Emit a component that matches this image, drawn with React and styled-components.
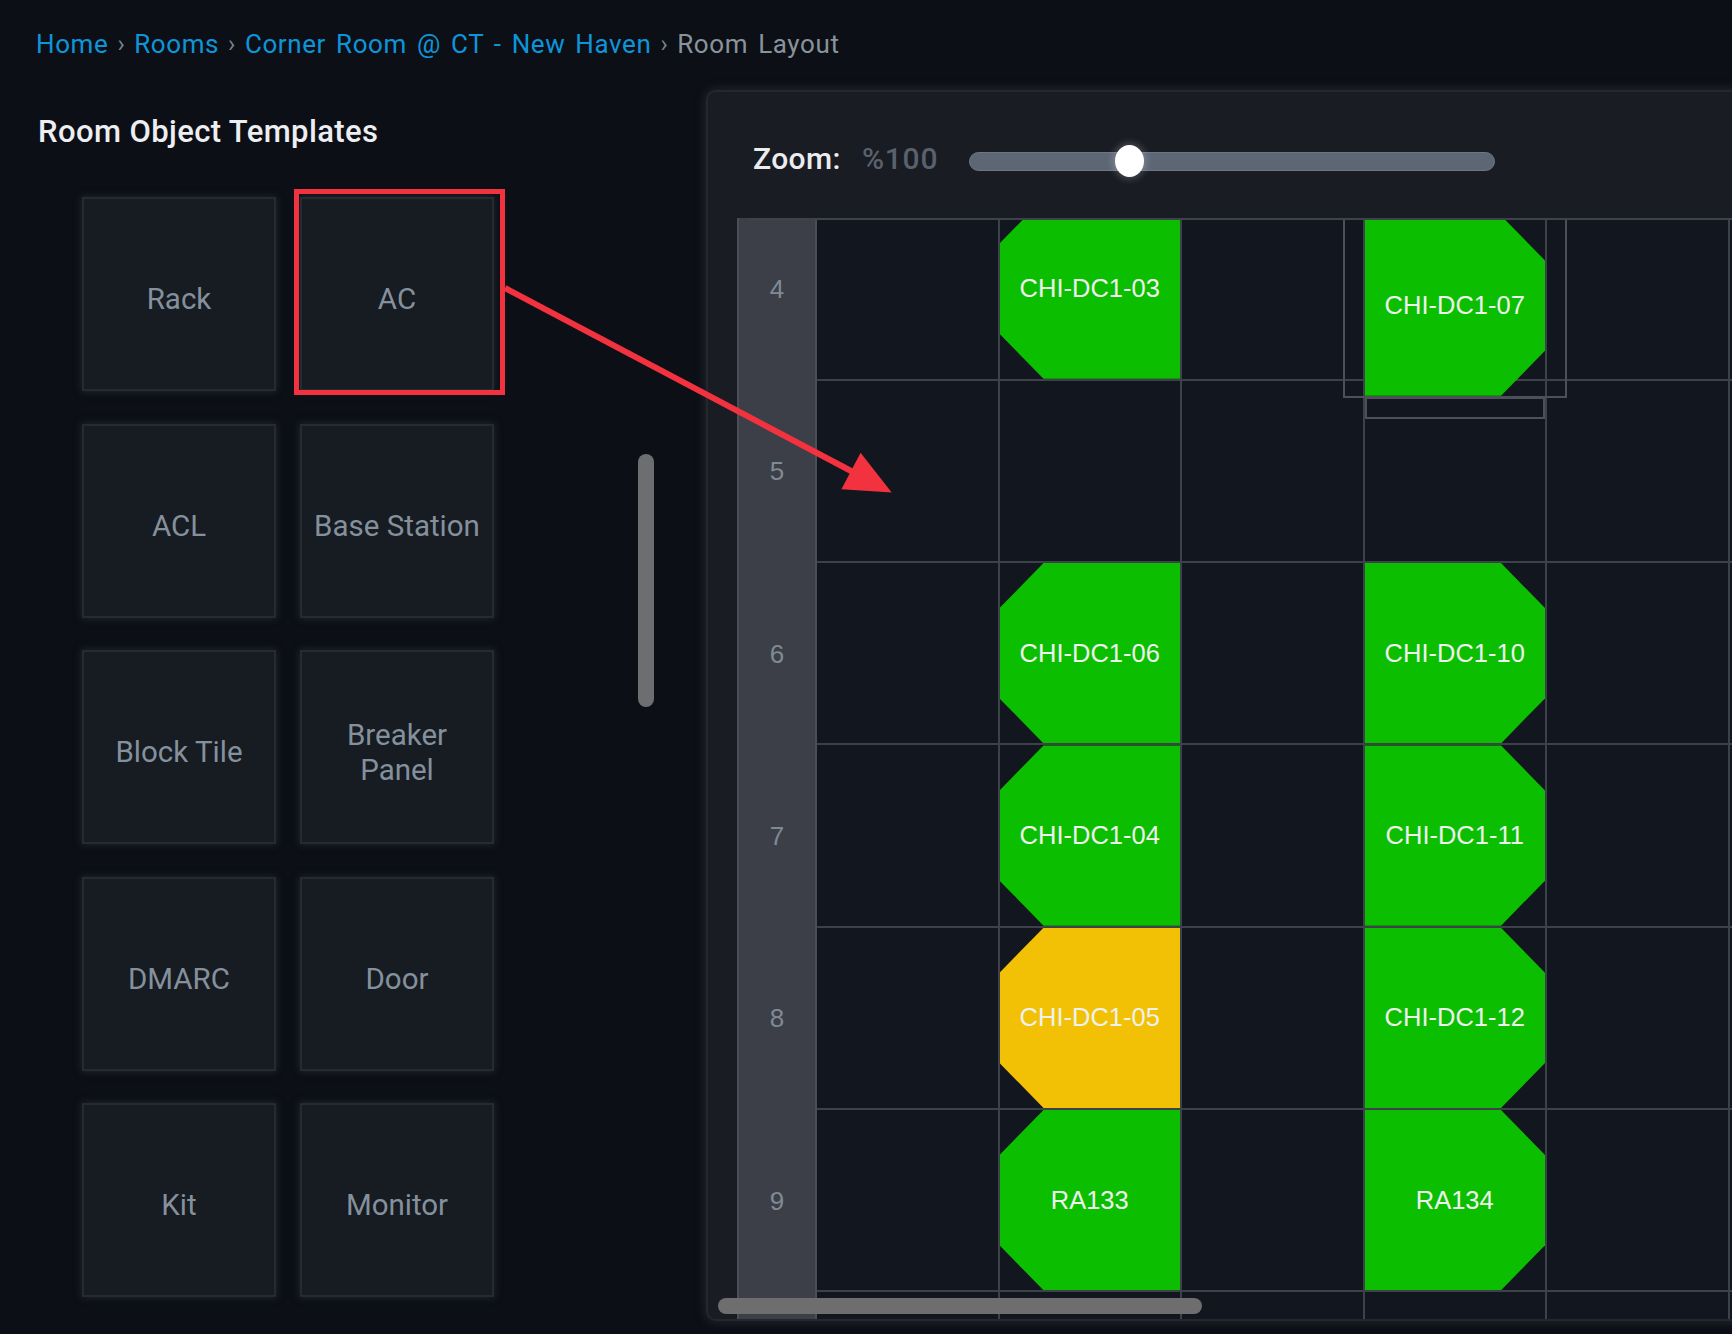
import React from "react";
import styled, { createGlobalStyle } from "styled-components";

const GlobalStyle = createGlobalStyle`
  html, body {
    margin: 0;
    padding: 0;
    background: #0c0f16;
  }
  body {
    font-family: Roboto, "Liberation Sans", sans-serif;
    overflow: hidden;
  }
  * {
    box-sizing: border-box;
  }
`;

const Page = styled.div`
  position: relative;
  width: 1732px;
  height: 1334px;
  overflow: hidden;
  background: #0c0f16;
`;

const Breadcrumb = styled.nav`
  display: flex;
  align-items: center;
  height: 59px;
  padding: 28px 0 0 36px;
  font-size: 26px;
  line-height: 32px;
  letter-spacing: 0.6px;
  word-spacing: 3px;
  white-space: nowrap;
`;

const Crumb = styled.span`
  color: ${(p) => (p.$current ? "#8a939c" : "#0e95d9")};
`;

const Sep = styled.span`
  margin: 0 9px;
  color: #7a848e;
  font-size: 24px;
`;

const Main = styled.div`
  display: flex;
  align-items: flex-start;
  margin-top: 31px;
`;

const Sidebar = styled.aside`
  position: relative;
  flex: 0 0 706px;
  height: 1244px;
  padding: 23px 0 0 38px;
`;

const SidebarTitle = styled.h2`
  margin: 0;
  font-size: 31px;
  line-height: 38px;
  font-weight: 500;
  letter-spacing: 0.4px;
  color: #eceef1;
`;

const TemplateGrid = styled.div`
  display: grid;
  grid-template-columns: repeat(2, 194px);
  grid-auto-rows: 194px;
  column-gap: 24px;
  row-gap: 32.5px;
  margin: 46px 0 0 44px;
`;

const TemplateCard = styled.div`
  display: flex;
  align-items: center;
  justify-content: center;
  padding: 11px 10px 0;
  text-align: center;
  background: #171b22;
  border: 2px solid #262a31;
  box-shadow: 0 0 7px 1px rgba(48, 52, 60, 0.55);
  color: #84919d;
  font-size: 29.5px;
  line-height: 35px;
`;

const SideScroll = styled.div`
  position: absolute;
  left: 638px;
  top: 364px;
  width: 16px;
  height: 253px;
  border-radius: 8px;
  background: #6d6e70;
`;

const Panel = styled.section`
  display: flex;
  flex-direction: column;
  flex: 0 0 1100px;
  height: 1231px;
  background: #191c23;
  border: 2px solid #24272e;
  border-radius: 10px;
  box-shadow: 0 0 8px 2px rgba(34, 37, 44, 0.9);
  overflow: hidden;
`;

const ZoomBar = styled.div`
  display: flex;
  align-items: center;
  flex: 0 0 126px;
  padding: 8px 0 0 45px;
`;

const ZoomLabel = styled.span`
  font-size: 30px;
  line-height: 36px;
  font-weight: 500;
  letter-spacing: 0.4px;
  color: #ececee;
`;

const ZoomValue = styled.span`
  margin: 0 31px 0 21px;
  font-size: 30px;
  line-height: 36px;
  font-weight: 500;
  letter-spacing: 0.8px;
  color: #59616d;
`;

const Track = styled.div`
  position: relative;
  width: 526px;
  height: 19px;
  margin-top: 4px;
  border-radius: 10px;
  background: #5d6675;
  border: 1px solid #6e7684;
`;

const Thumb = styled.div`
  position: absolute;
  top: 50%;
  left: ${(p) => p.$pos}px;
  width: 29px;
  height: 32px;
  border-radius: 50%;
  background: #ffffff;
  transform: translateY(-50%);
  box-shadow: 0 0 7px 2px rgba(255, 255, 255, 0.22);
`;

const GridViewport = styled.div`
  position: relative;
  flex: 1;
  margin-left: 6px;
  overflow: hidden;

  &::before {
    content: "";
    position: absolute;
    top: 0;
    left: 34px;
    right: 0;
    height: 2px;
    background: #3e424a;
    z-index: 3;
  }
`;

const GridInner = styled.div`
  display: flex;
  margin: -19.5px 0 0 23px;
`;

const RowLabels = styled.div`
  display: flex;
  flex-direction: column;
  flex: 0 0 80px;
  background: #3c3f47;
  border-left: 2px solid #4a4e56;
  border-right: 2px solid #4a4e56;
`;

const RowLabel = styled.div`
  display: flex;
  align-items: center;
  justify-content: center;
  height: 182.3px;
  font-family: "Liberation Sans", Arial, sans-serif;
  font-size: 26px;
  color: #7f8a96;
`;

const CellGrid = styled.div`
  display: grid;
  grid-template-columns: repeat(6, 180.5px);
  grid-auto-rows: 180.3px;
  gap: 2px;
  background: #3d4149;
`;

const Cell = styled.div`
  position: relative;
  background: #12161e;
`;

const cuts = {
  left: "polygon(44px 0, 100% 0, 100% 100%, 44px 100%, 0 calc(100% - 45px), 0 45px)",
  right:
    "polygon(0 0, calc(100% - 44px) 0, 100% 45px, 100% calc(100% - 45px), calc(100% - 44px) 100%, 0 100%)",
};

const Rack = styled.div`
  position: absolute;
  inset: 0;
  z-index: 2;
  display: flex;
  align-items: center;
  justify-content: center;
  background: ${(p) => (p.$warn ? "#f2c106" : "#0cbe00")};
  clip-path: ${(p) => cuts[p.$side]};
  transform: translateY(${(p) => (p.$dragging ? 17 : 0)}px);
  font-family: "Liberation Sans", Arial, sans-serif;
  font-size: 25.5px;
  color: #eef2ee;
`;

const DropOutline = styled.div`
  position: absolute;
  z-index: 2;
  border: 2px solid #4c5058;
`;

const OuterOutline = styled(DropOutline)`
  left: -21.5px;
  right: -21.5px;
  top: -25px;
  height: 224px;
`;

const FootOutline = styled(DropOutline)`
  left: 0;
  right: 0;
  top: 198px;
  height: 22.5px;
`;

const HScroll = styled.div`
  position: absolute;
  left: 4px;
  bottom: 5px;
  width: 484px;
  height: 16px;
  border-radius: 8px;
  background: #6e6e6f;
  z-index: 4;
`;

const Annotation = styled.svg`
  position: absolute;
  left: 0;
  top: 0;
  z-index: 10;
  pointer-events: none;
`;

const templates = [
  "Rack",
  "AC",
  "ACL",
  "Base Station",
  "Block Tile",
  "Breaker Panel",
  "DMARC",
  "Door",
  "Kit",
  "Monitor",
];

const rows = [4, 5, 6, 7, 8, 9, 10];
const columns = [1, 2, 3, 4, 5, 6];

const racks = {
  "4-2": { label: "CHI-DC1-03", side: "left" },
  "4-4": { label: "CHI-DC1-07", side: "right", dragging: true },
  "6-2": { label: "CHI-DC1-06", side: "left" },
  "7-2": { label: "CHI-DC1-04", side: "left" },
  "8-2": { label: "CHI-DC1-05", side: "left", warn: true },
  "9-2": { label: "RA133", side: "left" },
  "6-4": { label: "CHI-DC1-10", side: "right" },
  "7-4": { label: "CHI-DC1-11", side: "right" },
  "8-4": { label: "CHI-DC1-12", side: "right" },
  "9-4": { label: "RA134", side: "right" },
};

function LayoutGrid() {
  return (
    <GridViewport>
      <GridInner>
        <RowLabels>
          {rows.map((r) => (
            <RowLabel key={r}>{r < 10 ? r : ""}</RowLabel>
          ))}
        </RowLabels>
        <CellGrid>
          {rows.map((r) =>
            columns.map((c) => {
              const rack = racks[`${r}-${c}`];
              return (
                <Cell key={`${r}-${c}`}>
                  {rack && rack.dragging && (
                    <>
                      <OuterOutline />
                      <FootOutline />
                    </>
                  )}
                  {rack && (
                    <Rack $side={rack.side} $warn={rack.warn} $dragging={rack.dragging}>
                      {rack.label}
                    </Rack>
                  )}
                </Cell>
              );
            })
          )}
        </CellGrid>
      </GridInner>
      <HScroll />
    </GridViewport>
  );
}

export default function App() {
  return (
    <Page>
      <GlobalStyle />
      <Breadcrumb>
        <Crumb>Home</Crumb>
        <Sep>›</Sep>
        <Crumb>Rooms</Crumb>
        <Sep>›</Sep>
        <Crumb>Corner Room @ CT - New Haven</Crumb>
        <Sep>›</Sep>
        <Crumb $current>Room Layout</Crumb>
      </Breadcrumb>
      <Main>
        <Sidebar>
          <SidebarTitle>Room Object Templates</SidebarTitle>
          <TemplateGrid>
            {templates.map((t) => (
              <TemplateCard key={t}>{t}</TemplateCard>
            ))}
          </TemplateGrid>
          <SideScroll />
        </Sidebar>
        <Panel>
          <ZoomBar>
            <ZoomLabel>Zoom:</ZoomLabel>
            <ZoomValue>%100</ZoomValue>
            <Track>
              <Thumb $pos={145} />
            </Track>
          </ZoomBar>
          <LayoutGrid />
        </Panel>
      </Main>
      <Annotation width="1732" height="1334" viewBox="0 0 1732 1334">
        <rect x="296.5" y="191.5" width="206" height="201" fill="none" stroke="#f2323f" strokeWidth="5" />
        <line x1="505" y1="288" x2="853" y2="472" stroke="#f2323f" strokeWidth="6" />
        <polygon points="891.7,492.5 860.6,452.8 841.4,489.2" fill="#f2323f" />
      </Annotation>
    </Page>
  );
}
